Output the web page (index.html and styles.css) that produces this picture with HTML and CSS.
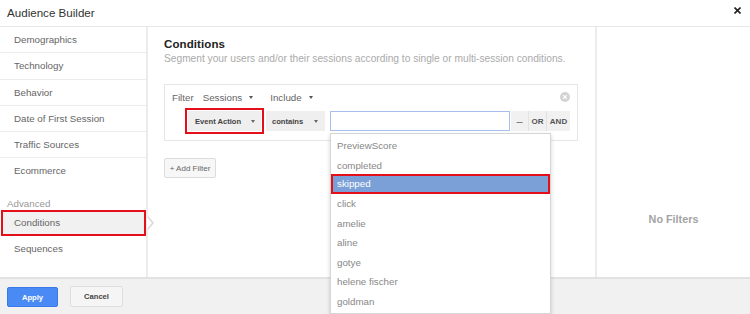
FILE: index.html
```html
<!DOCTYPE html>
<html lang="en">
<head>
  <meta charset="UTF-8">
  <title>Audience Builder</title>
  <link rel="stylesheet" href="styles.css">
</head>
<body>
  <div class="dialog">
    <div class="titlebar">
      <span class="title">Audience Builder</span>
      <span class="close">
        <svg width="7" height="7" viewBox="0 0 7 7"><path d="M0.5 0.5L6.5 6.5M6.5 0.5L0.5 6.5" stroke="#222" stroke-width="1.6"/></svg>
      </span>
    </div>

    <div class="content">
      <!-- left navigation -->
      <div class="sidebar">
        <div class="nav-item">Demographics</div>
        <div class="nav-item">Technology</div>
        <div class="nav-item">Behavior</div>
        <div class="nav-item">Date of First Session</div>
        <div class="nav-item">Traffic Sources</div>
        <div class="nav-item last">Ecommerce</div>
        <div class="nav-group">Advanced</div>
        <div class="nav-item active">Conditions<span class="pointer"></span></div>
        <div class="nav-item last">Sequences</div>
      </div>

      <!-- conditions editor -->
      <div class="main">
        <h2>Conditions</h2>
        <p class="lead">Segment your users and/or their sessions according to single or multi-session conditions.</p>

        <div class="filter-box">
          <div class="filter-head">
            <span class="label">Filter</span>
            <span class="dd">Sessions<i class="caret"></i></span>
            <span class="dd">Include<i class="caret"></i></span>
            <span class="remove">
              <svg width="10" height="10" viewBox="0 0 10 10"><circle cx="5" cy="5" r="5" fill="#d3d3d3"/><path d="M3.2 3.2L6.8 6.8M6.8 3.2L3.2 6.8" stroke="#fff" stroke-width="1.2"/></svg>
            </span>
          </div>
          <div class="filter-row">
            <div class="select marked">Event Action<i class="caret"></i></div>
            <div class="select small">contains<i class="caret"></i></div>
            <div class="value">
              <div class="input"></div>
              <ul class="suggest">
                <li>PreviewScore</li>
                <li>completed</li>
                <li class="hover">skipped</li>
                <li>click</li>
                <li>amelie</li>
                <li>aline</li>
                <li>gotye</li>
                <li>helene fischer</li>
                <li>goldman</li>
              </ul>
            </div>
            <div class="btn-group">
              <span class="minus">&ndash;</span>
              <span class="or">OR</span>
              <span class="and">AND</span>
            </div>
          </div>
        </div>

        <button class="add-filter">+ Add Filter</button>
      </div>

      <!-- summary -->
      <div class="summary">No Filters</div>
    </div>

    <div class="footer">
      <button class="btn primary">Apply</button>
      <button class="btn">Cancel</button>
    </div>
  </div>
</body>
</html>
```

FILE: styles.css
```css
html, body {
  margin: 0;
  padding: 0;
  overflow: hidden;
  background: #fff;
}
body {
  font-family: "Liberation Sans", Arial, sans-serif;
  font-size: 9.75px;
  color: #666;
}

.dialog {
  width: 750px;
  height: 314px;
  display: flex;
  flex-direction: column;
}

/* title bar */
.titlebar {
  height: 24px;
  border-bottom: 1px solid #e8e8e8;
  display: flex;
  align-items: center;
  justify-content: space-between;
  padding: 0 9px 2px 7px;
}
.title {
  font-size: 11.6px;
  color: #333;
}
.close {
  display: flex;
  margin-top: -4px;
}

.content {
  height: 250px;
  display: flex;
}

/* sidebar */
.sidebar {
  width: 146px;
  border-right: 2px solid #ececec;
  flex-shrink: 0;
}
.nav-item {
  position: relative;
  height: 25.25px;
  line-height: 25.25px;
  padding-left: 14px;
  border-bottom: 1px solid #ececec;
  color: #666;
}
.nav-item.last {
  border-bottom: 0;
  height: 26px;
  line-height: 26px;
}
.nav-group {
  margin-top: 13px;
  line-height: 13px;
  padding-left: 7px;
  color: #999;
}
.nav-item.active {
  background: #f1f1f1;
  border-bottom: 0;
  height: 26px;
  line-height: 26px;
  outline: 2px solid #e3101a;
  outline-offset: -2px;
  margin-left: 1px;
  padding-left: 13px;
}
.pointer {
  position: absolute;
  right: -8px;
  top: 6px;
  width: 0;
  height: 0;
  border-top: 7px solid transparent;
  border-bottom: 7px solid transparent;
  border-left: 6px solid #d8d8d8;
}
.pointer::after {
  content: "";
  position: absolute;
  left: -7px;
  top: -6px;
  border-top: 6px solid transparent;
  border-bottom: 6px solid transparent;
  border-left: 5px solid #fff;
}

/* main */
.main {
  flex: 1;
  padding: 10px 17px 0 16px;
  position: relative;
}
h2 {
  margin: 0;
  font-size: 11.5px;
  line-height: 14px;
  color: #222;
  font-weight: bold;
  letter-spacing: 0.1px;
}
.lead {
  margin: 1px 0 0;
  line-height: 14px;
  font-size: 10.2px;
  color: #aaa;
}

.filter-box {
  margin-top: 18px;
  border: 1px solid #e6e6e6;
  height: 55px;
}
.filter-head {
  height: 24px;
  display: flex;
  align-items: center;
  padding-left: 7px;
  color: #666;
}
.filter-head .label {
  margin-right: 9px;
}
.dd {
  display: flex;
  align-items: center;
  margin-right: 17px;
}
.caret {
  display: inline-block;
  width: 0;
  height: 0;
  border-left: 2.5px solid transparent;
  border-right: 2.5px solid transparent;
  border-top: 3px solid #555;
  margin-left: 7px;
}
.remove {
  margin-left: auto;
  margin-right: 7px;
  display: flex;
}

.filter-row {
  display: flex;
  margin-top: 2px;
  padding-left: 22px;
}
.select {
  height: 20px;
  background: #efefef;
  display: flex;
  align-items: center;
  justify-content: space-between;
  white-space: nowrap;
  font-size: 7.6px;
  font-weight: bold;
  color: #444;
  box-sizing: border-box;
  padding: 0 6px 0 7px;
  width: 73px;
  flex-shrink: 0;
}
.select .caret {
  border-top-color: #666;
  margin-left: 0;
}
.select.marked {
  outline: 2px solid #e3101a;
  outline-offset: 1px;
  margin-left: 1px;
}
.select.small {
  width: 59px;
  margin-left: 5px;
  padding-left: 6px;
  padding-right: 7px;
}
.value {
  position: relative;
  margin-left: 5px;
}
.input {
  width: 180px;
  height: 20px;
  box-sizing: border-box;
  border: 1px solid #a7bfec;
  background: #fff;
}
.suggest {
  position: absolute;
  left: 0;
  top: 22px;
  width: 219px;
  margin: 0;
  padding: 2px 0;
  list-style: none;
  background: #fff;
  border: 1px solid #d6d6d6;
  box-shadow: 0 2px 4px rgba(0,0,0,0.18);
  z-index: 10;
}
.suggest li {
  line-height: 19.5px;
  padding-left: 6px;
  color: #888;
}
.suggest li.hover {
  background: #7b9fd7;
  color: #fff;
  outline: 2px solid #e3101a;
  outline-offset: -2px;
  margin-top: -1px;
  line-height: 20px;
}

.btn-group {
  display: flex;
  height: 20px;
  margin-left: 1px;
}
.btn-group span {
  display: flex;
  align-items: center;
  justify-content: center;
  background: #f1f1f1;
  border-left: 1px solid #e2e2e2;
  font-size: 8px;
  font-weight: bold;
  color: #555;
}
.btn-group .minus { width: 17px; border-left: 0; font-weight: normal; font-size: 11px; color: #666; }
.btn-group .or { width: 17px; }
.btn-group .and { width: 23px; }

.add-filter {
  margin-top: 17px;
  height: 20px;
  width: 52px;
  padding: 0;
  border: 1px solid #dcdcdc;
  border-radius: 2px;
  background: #f7f7f7;
  font-family: "Liberation Sans", Arial, sans-serif;
  font-size: 8px;
  color: #666;
}

/* summary */
.summary {
  width: 155px;
  flex-shrink: 0;
  border-left: 2px solid #ececec;
  text-align: center;
  padding-top: 186px;
  box-sizing: border-box;
  font-size: 10.8px;
  font-weight: bold;
  color: #a3a3a3;
  line-height: 13px;
}

/* footer */
.footer {
  flex: 1;
  background: #f1f1f1;
  border-top: 2px solid #e2e2e2;
  display: flex;
  align-items: flex-start;
  padding: 7px 0 0 7px;
}
.btn {
  height: 21px;
  width: 53px;
  padding: 0;
  margin-right: 12px;
  border: 1px solid #dedede;
  border-radius: 2px;
  background: #f5f5f5;
  font-family: "Liberation Sans", Arial, sans-serif;
  font-size: 7.6px;
  font-weight: bold;
  color: #444;
}
.btn.primary {
  width: 51px;
  margin-top: 1px;
  height: 20px;
  background: #4a8af4;
  border-color: #3b78e7;
  color: #fff;
}
```
